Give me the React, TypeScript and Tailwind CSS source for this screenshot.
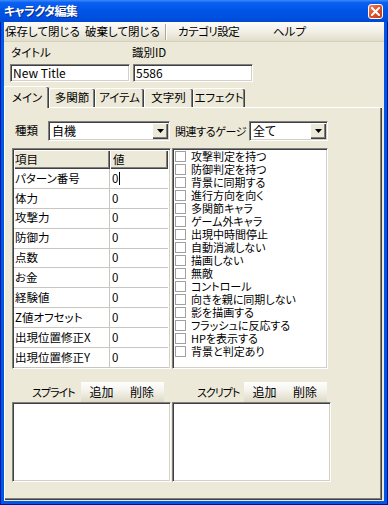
import React from "react";

const sunken =
  "border border-t-[#808080] border-l-[#808080] border-r-white border-b-white shadow-[inset_1px_1px_0_#404040,inset_-1px_-1px_0_#d4d0c8]";

const gridRows = [
  "パターン番号",
  "体力",
  "攻撃力",
  "防御力",
  "点数",
  "お金",
  "経験値",
  "Z値オフセット",
  "出現位置修正X",
  "出現位置修正Y",
];

const flags = [
  "攻撃判定を持つ",
  "防御判定を持つ",
  "背景に同期する",
  "進行方向を向く",
  "多関節キャラ",
  "ゲーム外キャラ",
  "出現中時間停止",
  "自動消滅しない",
  "描画しない",
  "無敵",
  "コントロール",
  "向きを親に同期しない",
  "影を描画する",
  "フラッシュに反応する",
  "HPを表示する",
  "背景と判定あり",
];

const tabs = ["メイン", "多関節", "アイテム", "文字列", "エフェクト"];
const tabWidths = ["w-[45px]", "w-[46px]", "w-[49px]", "w-[49px]", "w-[52px]"];

function Combo({ value, className }: { value: string; className: string }) {
  return (
    <div className={`${sunken} ${className} h-[20px] bg-white flex items-center`}>
      <span className="flex-1 pl-[3px] leading-none text-[12px]">{value}</span>
      <div className="w-[16px] h-[16px] mr-[1px] bg-[#ece9d8] flex items-center justify-center shadow-[inset_1px_1px_0_#ffffff,inset_-1px_-1px_0_#404040,inset_-2px_-2px_0_#808080]">
        <svg width="7" height="4" viewBox="0 0 7 4">
          <path d="M0 0h7L3.5 4z" fill="#000" />
        </svg>
      </div>
    </div>
  );
}

function ToolBar() {
  return (
    <div className="w-[83px] h-[20px] flex bg-[linear-gradient(to_bottom,#fefefd_0%,#f5f4ee_40%,#dedac6_100%)]">
      <span className="w-[41px] flex items-center justify-center leading-none text-[12px]">追加</span>
      <span className="w-[40px] flex items-center justify-center leading-none text-[12px]">削除</span>
    </div>
  );
}

export default function App() {
  return (
    <div className="w-[388px] h-[505px] flex flex-col whitespace-nowrap bg-[#0256e6] shadow-[inset_1px_0_0_#0019a0,inset_-1px_0_0_#00138c,inset_0_-1px_0_#00138c] font-['Noto_Sans_CJK_JP',sans-serif] [font-feature-settings:'palt'] text-[11px] text-black">
      {/* caption */}
      <div className="h-[22px] flex items-center justify-between pl-[4px] pr-[5px] bg-[linear-gradient(to_bottom,#3d8bff_0%,#0a60f0_12%,#0055e6_45%,#0050e0_80%,#0048d0_100%)]">
        <span className="text-white font-bold text-[12px] tracking-[-0.6px] leading-none [text-shadow:1px_1px_0_#0a2a8a]">
          キャラクタ編集
        </span>
        <div className="w-[15px] h-[15px] rounded-[3px] border border-white bg-[linear-gradient(135deg,#f08a6a_0%,#e2542e_40%,#c23a16_100%)] flex items-center justify-center">
          <svg width="9" height="9" viewBox="0 0 9 9">
            <path d="M1 1l7 7M8 1l-7 7" stroke="#fff" strokeWidth="2" strokeLinecap="square" />
          </svg>
        </div>
      </div>

      <div className="flex-1 mx-[4px] mb-[4px] bg-[#ece9d8] flex flex-col">
        {/* menu bar */}
        <div className="h-[20px] flex items-center text-[11.5px] bg-[linear-gradient(to_bottom,#fdfcf9_0%,#f1efe6_50%,#e1ddca_100%)] border-b border-[#d4d0bd]">
          <span className="w-[81px] pl-[1px] leading-none">保存して閉じる</span>
          <span className="w-[80px] leading-none">破棄して閉じる</span>
          <span className="w-[2px] h-[16px] border-l border-[#aca899] border-r border-r-white" />
          <span className="ml-[11px] w-[95px] leading-none tracking-[-0.5px]">カテゴリ設定</span>
          <span className="leading-none">ヘルプ</span>
        </div>

        {/* title / id */}
        <div className="flex pl-[6px] pt-[5px] gap-[3px] text-[11.5px]">
          <div className="flex flex-col w-[120px]">
            <span className="h-[12px] leading-none pl-[1px]">タイトル</span>
            <div className={`${sunken} mt-[5px] h-[18px] bg-white flex items-center pl-[2px] leading-none text-[12px]`}>
              New Title
            </div>
          </div>
          <div className="flex flex-col w-[120px]">
            <span className="h-[12px] leading-none -ml-[1px]">識別ID</span>
            <div className={`${sunken} mt-[5px] h-[18px] bg-white flex items-center pl-[2px] leading-none text-[12px]`}>
              5586
            </div>
          </div>
        </div>

        {/* tabs */}
        <div className="mt-[4px] h-[21px] flex items-end text-[11.5px]">
          {tabs.map((t, i) =>
            i === 0 ? (
              <div
                key={t}
                className={`${tabWidths[i]} h-[22px] -mb-[1px] z-10 bg-[#ece9d8] rounded-t-[2px] border-t border-l border-white shadow-[inset_-1px_0_0_#404040,inset_-2px_0_0_#808080] flex items-center justify-center leading-none`}
              >
                {t}
              </div>
            ) : (
              <div
                key={t}
                className={`${tabWidths[i]} h-[19px] bg-[#ece9d8] rounded-t-[2px] border-t border-white shadow-[inset_-1px_0_0_#404040,inset_-2px_0_0_#808080,inset_1px_0_0_#ffffff] flex items-center justify-center leading-none`}
              >
                {t}
              </div>
            )
          )}
        </div>

        {/* tab panel */}
        <div className="flex-1 mr-[2px] mb-[1px] border-t border-l border-white shadow-[inset_-1px_-1px_0_#404040,inset_-2px_-2px_0_#808080] flex flex-col">
          <div className="mt-[13px] flex items-center pl-[10px] text-[11.5px]">
            <span className="w-[33px] leading-none">種類</span>
            <Combo value="自機" className="w-[122px]" />
            <span className="ml-[5px] w-[74px] leading-none text-[11px] tracking-[-0.4px]">関連するゲージ</span>
            <Combo value="全て" className="w-[79px]" />
          </div>

          <div className="mt-[7px] flex pl-[7px] gap-[1px]">
            {/* property grid */}
            <div className={`${sunken} w-[159px] h-[221px] bg-white flex flex-col text-[11.5px]`}>
              <div className="flex h-[19px] ml-[1px] mt-[1px] mr-[2px]">
                <div className="w-[96px] flex items-center pl-[1px] leading-none bg-[#ece9d8] shadow-[inset_1px_1px_0_#ffffff,inset_-1px_-1px_0_#404040,inset_-2px_-2px_0_#808080]">
                  項目
                </div>
                <div className="flex-1 flex items-center pl-[3px] leading-none bg-[#ece9d8] shadow-[inset_1px_1px_0_#ffffff,inset_-1px_-1px_0_#404040,inset_-2px_-2px_0_#808080]">
                  値
                </div>
              </div>
              {gridRows.map((r, i) => (
                <div key={r} className="flex h-[20px] ml-[1px] mr-[2px] border-b border-[#c8c6be]">
                  <div className="w-[96px] flex items-center pl-[1px] leading-none border-r border-[#c8c6be]">
                    {r}
                  </div>
                  <div className="flex-1 flex items-center pl-[2px] leading-none">
                    0{i === 0 && <span className="ml-[1px] w-[1px] h-[13px] bg-black" />}
                  </div>
                </div>
              ))}
            </div>

            {/* flag checklist */}
            <div className={`${sunken} w-[156px] h-[221px] bg-white pt-[1px] pl-[2px] flex flex-col`}>
              {flags.map((f) => (
                <div key={f} className="h-[13px] flex items-center">
                  <span className="w-[11px] h-[11px] border border-[#a0a0a0] bg-white mr-[5px]" />
                  <span className="leading-none">{f}</span>
                </div>
              ))}
            </div>
          </div>

          {/* sprites / scripts */}
          <div className="mt-[13px] flex pl-[7px] gap-[1px]">
            <div className="w-[159px] flex flex-col">
              <div className="h-[20px] flex items-center pl-[20px]">
                <span className="w-[49px] leading-none tracking-[-1px]">スプライト</span>
                <ToolBar />
              </div>
              <div className={`${sunken} h-[80px] bg-white`} />
            </div>
            <div className="w-[159px] flex flex-col">
              <div className="h-[20px] flex items-center pl-[25px]">
                <span className="w-[47px] leading-none tracking-[-1px]">スクリプト</span>
                <ToolBar />
              </div>
              <div className={`${sunken} h-[80px] bg-white`} />
            </div>
          </div>
        </div>
      </div>
    </div>
  );
}
